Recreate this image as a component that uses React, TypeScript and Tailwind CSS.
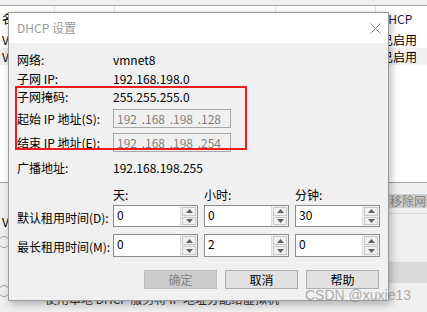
import React from "react";

const FONT = "font-['Noto_Sans_CJK_SC','Microsoft_YaHei',sans-serif]";

function Arrow({ up }: { up?: boolean }) {
  return (
    <svg width="7" height="4" viewBox="0 0 7 4">
      {up ? (
        <path d="M0 4 L3.5 0 L7 4 Z" fill="#606060" />
      ) : (
        <path d="M0 0 L3.5 4 L7 0 Z" fill="#606060" />
      )}
    </svg>
  );
}

function Spin({ value, h }: { value: string; h: string }) {
  return (
    <div className={`flex w-[85px] ${h} border border-[#8c8c8c] bg-white`}>
      <div className="flex-1 pl-[3px] pt-[3px] text-[12px] leading-none text-black">{value}</div>
      <div className="flex w-[17px] flex-col gap-[1px] border-l border-[#dcdcdc] bg-[#f0f0f0] p-[1px]">
        <div className="flex flex-1 items-center justify-center border border-[#c8c8c8] bg-[#f0f0f0]">
          <Arrow up />
        </div>
        <div className="flex flex-1 items-center justify-center border border-[#c8c8c8] bg-[#f0f0f0]">
          <Arrow />
        </div>
      </div>
    </div>
  );
}

function IpBox({ parts }: { parts: string[] }) {
  return (
    <div className="flex h-[19px] w-[118px] items-center border border-[#a8a8a8] bg-[#f0f0f0] text-[12px] leading-none text-[#808080]">
      <span className="w-[23px] text-right">{parts[0]}</span>
      <span className="w-[28px] text-right">{parts[1]}</span>
      <span className="w-[28px] text-right">{parts[2]}</span>
      <span className="w-[28px] text-right">{parts[3]}</span>
    </div>
  );
}

function Row({ label, children, cls }: { label: string; children: React.ReactNode; cls: string }) {
  return (
    <div className={`flex items-center ${cls}`}>
      <div className="w-[96px] text-[12px] leading-none">{label}</div>
      <div className="text-[12px] leading-none">{children}</div>
    </div>
  );
}

export default function App() {
  return (
    <div className={`relative h-[312px] w-[427px] overflow-hidden bg-white ${FONT} text-black`}>
      {/* background window */}
      <div className="flex h-full flex-col">
        <div className="h-[6px] border-b border-[#a0a0a0] bg-[#f0f0f0]" />
        <div className="flex h-[25px] text-[12px] leading-none">
          <div className="w-[55px] shrink-0 border-r border-[#e5e5e5] pl-[2px] pt-[7px]">名称</div>
          <div className="w-[60px] shrink-0 border-r border-[#e5e5e5]" />
          <div className="w-[161px] shrink-0 border-r border-[#e5e5e5]" />
          <div className="w-[100px] shrink-0 border-r border-[#e5e5e5]" />
          <div className="flex-1 pl-[4px] pt-[7px] text-[#1a1a3a]">DHCP</div>
        </div>
        <div className="flex h-[17px] items-center justify-between text-[12px] leading-none">
          <span className="pl-[2px]">VMnet0</span>
          <span className="w-[46px]">已启用</span>
        </div>
        <div className="flex h-[17px] items-center justify-between bg-[#f0f0f0] text-[12px] leading-none">
          <span className="pl-[2px]">VMnet1</span>
          <span className="w-[46px]">已启用</span>
        </div>
        <div className="h-[117px]" />
        <div className="flex flex-1 border-t border-[#a0a0a0] bg-[#f0f0f0]">
          <div className="flex w-[14px] flex-col items-start text-[12px] leading-none">
            <span className="mt-[33px] pl-[2px]">V</span>
            <span className="mt-[8px] ml-[-2px] h-[12px] w-[12px] rounded-full border border-[#a0a0a0]" />
            <span className="mt-[37px] ml-[-2px] h-[12px] w-[12px] rounded-full border border-[#a0a0a0]" />
          </div>
          <div className="flex-1 pl-[31px] pt-[110px] text-[12px] leading-none text-[#333]">使用本地 DHCP 服务将 IP 地址分配给虚拟机</div>
          <div className="flex w-[39px] flex-col">
            <div className="mt-[11px] flex h-[14px] items-center bg-[#cccccc] pl-[2px] text-[12px] leading-none whitespace-nowrap text-[#838383]">移除网络</div>
            <div className="mt-[5px] h-[1px] bg-[#dadada]" />
            <div className="mt-[48px] h-[21px] bg-[#dadada]" />
          </div>
        </div>
      </div>

      {/* dialog window */}
      <div className="absolute left-[8px] top-[12px] flex h-[289px] w-[381px] flex-col border border-[#9a9a9a] bg-[#f0f0f0] shadow-[2px_3px_8px_rgba(0,0,0,0.28)]">
        <div className="flex h-[30px] items-center justify-between bg-white pl-[8px] pr-[7px]">
          <span className="text-[12px] leading-none text-[#9a9a9a]">DHCP 设置</span>
          <svg width="11" height="11" viewBox="0 0 11 11">
            <path d="M0.5 0.5 L10.5 10.5 M10.5 0.5 L0.5 10.5" stroke="#8a8a8a" strokeWidth="1" />
          </svg>
        </div>
        <div className="flex flex-col pl-[8px] pt-[8px]">
          <Row label="网络:" cls="h-[18px]">vmnet8</Row>
          <Row label="子网 IP:" cls="h-[19px]">192.168.198.0</Row>
          <Row label="子网掩码:" cls="h-[18px]">255.255.255.0</Row>
          <Row label="起始 IP 地址(S):" cls="mt-[3px] h-[19px]">
            <IpBox parts={["192", ".168", ".198", ".128"]} />
          </Row>
          <Row label="结束 IP 地址(E):" cls="mt-[5px] h-[19px]">
            <IpBox parts={["192", ".168", ".198", ".254"]} />
          </Row>
          <Row label="广播地址:" cls="mt-[6px] h-[19px]">192.168.198.255</Row>

          <div className="mt-[10px] flex h-[16px] items-center gap-[6px] pl-[96px] text-[12px] leading-none">
            <span className="w-[85px]">天:</span>
            <span className="w-[85px]">小时:</span>
            <span className="w-[85px]">分钟:</span>
          </div>
          <div className="mt-[2px] flex h-[22px] items-center">
            <div className="w-[96px] pt-[4px] text-[12px] leading-none">默认租用时间(D):</div>
            <div className="flex gap-[6px]">
              <Spin value="0" h="h-[22px]" />
              <Spin value="0" h="h-[22px]" />
              <Spin value="30" h="h-[22px]" />
            </div>
          </div>
          <div className="mt-[7px] flex h-[23px] items-center">
            <div className="w-[96px] pt-[2px] text-[12px] leading-none">最长租用时间(M):</div>
            <div className="flex gap-[6px]">
              <Spin value="0" h="h-[23px]" />
              <Spin value="2" h="h-[23px]" />
              <Spin value="0" h="h-[23px]" />
            </div>
          </div>
        </div>
        <div className="mt-[13px] flex justify-end gap-[8px] pr-[9px]">
          <div className="flex h-[19px] w-[73px] items-center justify-center border border-[#bfbfbf] bg-[#cccccc] text-[12px] leading-none text-[#838383]">确定</div>
          <div className="flex h-[19px] w-[73px] items-center justify-center border border-[#adadad] bg-[#e1e1e1] text-[12px] leading-none">取消</div>
          <div className="flex h-[19px] w-[73px] items-center justify-center border border-[#adadad] bg-[#e1e1e1] text-[12px] leading-none">帮助</div>
        </div>
      </div>

      {/* annotation */}
      <div className="absolute left-[15px] top-[86px] h-[64px] w-[232px] border-2 border-[#ee1c1c]" />

      {/* watermark */}
      <div className="absolute left-[305px] top-[288px] font-['Liberation_Sans',sans-serif] text-[14px] leading-none text-[#7a7a7a]/60">
        CSDN @xuxie13
      </div>
    </div>
  );
}
